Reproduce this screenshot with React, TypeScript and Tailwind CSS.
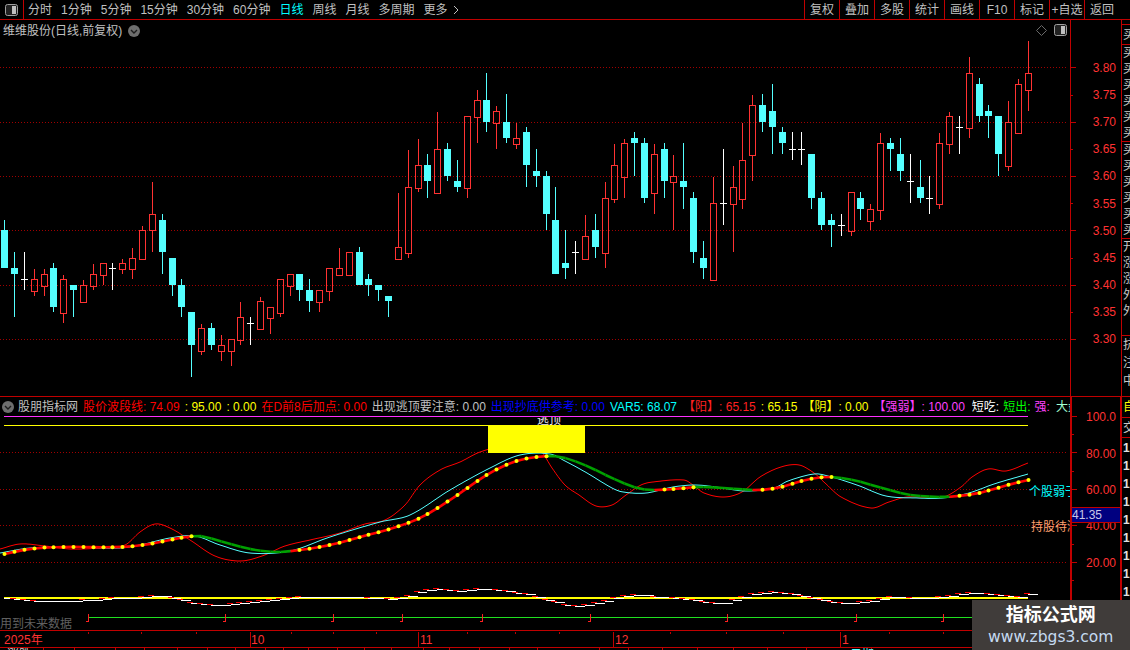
const RED = '#ff3232'
const CYAN = '#54ffff'
const LINE = '#c00000'

type Row = [string, number, number, number, number, number]

// rows are [type, x, wick top, body top, body bottom, wick bottom], read off 3x crops
const scale = (ox: number, oy: number, rows: Row[]) =>
  rows.map(([t, x, wt, bt, bb, wb]) => ({
    t,
    x: Math.floor(ox + x / 3),
    wt: Math.round(oy + wt / 3),
    bt: Math.round(oy + bt / 3),
    bb: Math.round(oy + bb / 3),
    wb: Math.round(oy + wb / 3),
  }))

const candles = [
  ...scale(0, 170, [
    ['c', 13, 150, 180, 294, 294], ['c', 43, 246, 294, 312, 441], ['w', 73, 246, 328, 328, 360], ['r', 103, 297, 328, 362, 378],
    ['r', 133, 297, 313, 347, 378], ['c', 160, 279, 294, 411, 426], ['r', 190, 315, 328, 428, 459], ['c', 220, 346, 346, 360, 441],
    ['r', 250, 330, 346, 395, 395], ['r', 280, 282, 313, 347, 360], ['r', 310, 280, 280, 314, 345], ['w', 337, 279, 295, 295, 360],
    ['r', 367, 267, 280, 296, 312], ['r', 397, 234, 265, 296, 327], ['r', 427, 168, 181, 266, 266], ['r', 457, 36, 133, 181, 246],
    ['c', 487, 132, 150, 246, 312], ['c', 517, 264, 264, 345, 378], ['c', 544, 327, 345, 411, 441], ['c', 574, 426, 426, 525, 621],
    ['r', 604, 462, 475, 542, 555], ['c', 634, 459, 474, 525, 540], ['r', 664, 495, 526, 542, 573], ['r', 694, 508, 508, 542, 588],
    ['r', 721, 396, 442, 509, 525], ['w', 751, 441, 460, 460, 525], ['r', 781, 381, 394, 476, 476], ['r', 811, 412, 412, 443, 492],
    ['r', 841, 328, 328, 428, 441], ['r', 871, 313, 313, 347, 378], ['c', 898, 312, 312, 360, 393], ['c', 928, 327, 360, 393, 426],
    ['r', 958, 361, 361, 395, 426], ['r', 988, 295, 295, 362, 393], ['r', 1018, 234, 295, 314, 314], ['r', 1048, 247, 247, 314, 314],
    ['c', 1078, 231, 246, 345, 345], ['c', 1105, 312, 327, 345, 378], ['c', 1135, 345, 345, 360, 393], ['c', 1165, 378, 378, 393, 441],
  ]),
  ...scale(380, 60, [
    ['r', 55, 399, 562, 596, 596], ['r', 85, 270, 382, 578, 594], ['r', 115, 237, 316, 383, 396], ['c', 142, 282, 315, 363, 414],
    ['r', 172, 156, 268, 398, 398], ['c', 202, 249, 267, 348, 363], ['c', 232, 300, 363, 381, 396], ['r', 262, 169, 169, 383, 414],
    ['r', 292, 90, 121, 170, 249], ['c', 319, 39, 120, 186, 216], ['r', 349, 138, 154, 188, 267], ['c', 379, 102, 186, 234, 249],
    ['r', 409, 189, 235, 251, 267], ['c', 439, 201, 216, 315, 381], ['c', 469, 267, 333, 348, 381], ['c', 499, 333, 348, 462, 510],
    ['c', 526, 381, 480, 642, 642], ['c', 556, 510, 609, 624, 657], ['w', 586, 543, 577, 577, 642], ['r', 616, 465, 529, 596, 596],
    ['c', 646, 462, 510, 561, 594], ['r', 676, 366, 415, 578, 624], ['r', 703, 252, 316, 416, 429], ['r', 733, 237, 250, 350, 414],
    ['c', 763, 216, 234, 249, 348], ['c', 793, 234, 249, 414, 429], ['r', 823, 252, 283, 398, 462], ['c', 853, 249, 267, 363, 414],
    ['r', 880, 285, 349, 365, 510], ['c', 910, 249, 363, 381, 447], ['c', 940, 396, 414, 576, 609], ['c', 970, 543, 594, 624, 657],
    ['r', 1000, 350, 430, 659, 659], ['w', 1030, 267, 430, 430, 495],
  ]),
  ...scale(730, 50, [
    ['r', 10, 348, 412, 461, 606], ['r', 37, 219, 331, 446, 477], ['r', 67, 135, 166, 314, 393], ['c', 97, 132, 165, 216, 246],
    ['c', 127, 102, 183, 231, 312], ['c', 157, 231, 246, 279, 312], ['w', 187, 246, 298, 298, 330], ['w', 214, 246, 298, 298, 345],
    ['c', 244, 312, 312, 444, 477], ['c', 274, 426, 444, 525, 540], ['c', 304, 492, 510, 525, 591], ['w', 334, 492, 526, 526, 558],
    ['r', 364, 427, 427, 542, 558], ['c', 391, 426, 444, 477, 510], ['r', 421, 462, 478, 512, 540], ['r', 451, 249, 280, 479, 510],
    ['c', 481, 264, 279, 297, 363], ['c', 511, 264, 312, 363, 393], ['w', 541, 312, 394, 394, 459], ['c', 571, 330, 411, 444, 459],
    ['w', 598, 378, 445, 445, 492], ['r', 628, 249, 280, 461, 477], ['r', 658, 186, 199, 281, 312], ['w', 688, 198, 232, 232, 312],
    ['r', 718, 21, 70, 233, 264], ['c', 748, 84, 102, 198, 216], ['c', 775, 165, 183, 198, 264], ['c', 805, 198, 198, 312, 378],
    ['r', 835, 153, 217, 347, 363], ['r', 865, 87, 103, 248, 248], ['r', 895, -27, 70, 119, 183],
  ]),
]

const redCurve = [[0, 549], [20, 544], [45, 546], [70, 549], [100, 548], [125, 545], [140, 532], [155, 524], [170, 528], [190, 540], [215, 556], [240, 561], [262, 556], [285, 546], [310, 540], [340, 533], [365, 524], [385, 520], [405, 505], [420, 485], [440, 470], [460, 462], [480, 452], [500, 447], [525, 447], [540, 450], [552, 468], [565, 485], [579, 495], [596, 506], [612, 505], [626, 495], [641, 485], [653, 482], [684, 480], [693, 485], [704, 493], [724, 497], [742, 492], [760, 477], [781, 467], [799, 465], [814, 473], [825, 483], [841, 497], [871, 508], [889, 502], [907, 497], [943, 497], [961, 487], [972, 477], [988, 469], [1006, 471], [1028, 463]]
const cyanCurve = [[0, 553], [30, 548], [70, 547], [120, 548], [140, 545], [170, 538], [195, 536], [220, 545], [250, 553], [290, 551], [330, 537], [380, 522], [410, 515], [450, 490], [490, 468], [520, 455], [550, 454], [565, 461], [587, 473], [612, 488], [623, 492], [646, 493], [673, 487], [695, 485], [716, 487], [745, 491], [774, 488], [788, 481], [814, 474], [828, 476], [857, 485], [886, 496], [918, 498], [943, 498], [969, 493], [994, 484], [1028, 474]]
const mainCurve = [[0, 555], [30, 549], [60, 547], [120, 547], [150, 544], [180, 538], [200, 536], [220, 541], [250, 549], [275, 552], [300, 550], [330, 545], [360, 537], [390, 529], [420, 518], [450, 500], [490, 473], [520, 460], [550, 456], [565, 458], [587, 466], [612, 478], [637, 488], [652, 490], [673, 489], [702, 487], [738, 489], [760, 490], [781, 487], [810, 479], [832, 477], [857, 481], [882, 488], [911, 495], [943, 497], [958, 496], [979, 493], [1008, 485], [1028, 480]]
const oscCurve = [[4, 598], [22, 600], [47, 601], [72, 601], [101, 599], [144, 597], [159, 596], [173, 598], [187, 602], [213, 605], [234, 604], [252, 602], [278, 599], [299, 597], [324, 597], [346, 597], [375, 598], [400, 598], [418, 592], [436, 589], [454, 591], [483, 589], [505, 591], [533, 596], [565, 605], [576, 606], [601, 602], [616, 598], [634, 595], [659, 597], [684, 599], [709, 603], [727, 602], [749, 595], [770, 592], [796, 595], [817, 599], [839, 603], [871, 601], [889, 597], [925, 598], [954, 595], [979, 593], [997, 595], [1019, 597], [1028, 594]]

// smooth value of a waypoint list at x (cubic hermite)
const at = (pts: number[][], x: number) => {
  const n = pts.length
  const slope = (i: number) => {
    const a = pts[Math.max(i - 1, 0)]
    const b = pts[Math.min(i + 1, n - 1)]
    return (b[1] - a[1]) / (b[0] - a[0])
  }
  for (let i = 1; i < n; i++) {
    if (x <= pts[i][0]) {
      const [x0, y0] = pts[i - 1]
      const [x1, y1] = pts[i]
      const h = x1 - x0
      const t = (x - x0) / h
      const t2 = t * t
      const t3 = t2 * t
      return (2 * t3 - 3 * t2 + 1) * y0 + (t3 - 2 * t2 + t) * h * slope(i - 1) + (-2 * t3 + 3 * t2) * y1 + (t3 - t2) * h * slope(i)
    }
  }
  return pts[n - 1][1]
}
const smooth = (pts: number[][]) => {
  const out: string[] = []
  for (let x = 0; x <= 1028; x += 2) out.push(`${x},${at(pts, x).toFixed(1)}`)
  return out.join(' ')
}
const rising = (x: number) =>
  x <= 200 || (x >= 295 && x <= 553) || (x >= 655 && x <= 703) || (x >= 760 && x <= 832) || (x >= 955)

const tabs = ['分时', '1分钟', '5分钟', '15分钟', '30分钟', '60分钟', '日线', '周线', '月线', '多周期', '更多']
const tools = ['复权', '叠加', '多股', '统计', '画线', 'F10', '标记', '+自选']
const prices = ['3.80', '3.75', '3.70', '3.65', '3.60', '3.55', '3.50', '3.45', '3.40', '3.35', '3.30']
const levels = ['100.0', '80.00', '60.00', '40.00', '20.00']
const monthMarks = [88, 225, 333, 402, 482, 590, 727, 856, 943]
const minorTop = [88, 141, 196, 291, 333, 376, 467, 515, 559, 670, 726, 783, 889, 943]
const minorBottom = [43, 74, 115, 144, 177, 207, 235, 265, 283, 308, 337, 364, 391, 423, 449, 479, 509, 537, 599, 628, 662, 697, 733, 767, 806, 871]

const PanelIcon = () => (
  <svg width="13" height="12" viewBox="0 0 13 12">
    <rect x="0.5" y="0.5" width="12" height="11" rx="2" fill="#222" stroke="#a0a0a0" />
    <rect x="7" y="2" width="4" height="8" fill="#c0c0c0" />
  </svg>
)

const Chevron = () => (
  <svg width="12" height="12" viewBox="0 0 12 12" className="shrink-0">
    <circle cx="6" cy="6" r="6" fill="#6e6e6e" />
    <path d="M3 5l3 3 3-3" fill="none" stroke="#1c1c1c" strokeWidth="1.4" />
  </svg>
)

const Candles = () => (
  <g shapeRendering="crispEdges">
    {candles.map((c, i) => {
      const color = c.t === 'r' ? RED : c.t === 'c' ? CYAN : '#ffffff'
      return (
        <g key={i} fill={color}>
          <rect x={c.x} y={c.wt} width="1" height={Math.max(c.bt - c.wt, 0)} />
          <rect x={c.x} y={c.bb} width="1" height={Math.max(c.wb - c.bb, 0)} />
          {c.t === 'r' && <rect x={c.x - 2.5} y={c.bt + 0.5} width="6" height={c.bb - c.bt} fill="none" stroke={color} />}
          {c.t === 'c' && <rect x={c.x - 3} y={c.bt} width="7" height={c.bb - c.bt} />}
          {c.t === 'w' && <rect x={c.x - 3} y={c.bt} width="7" height="1" />}
        </g>
      )
    })}
  </g>
)

const Oscillator = () => {
  const xs = candles.map((c) => c.x)
  return (
    <g shapeRendering="crispEdges">
      <rect x="4" y="597" width="1024" height="2" fill="#ffff00" />
      {xs.map((x, i) => {
        const y = Math.round(at(oscCurve, x))
        const prev = i ? Math.round(at(oscCurve, xs[i - 1])) : y
        const next = xs[i + 1] ?? x + 10
        return (
          <g key={x}>
            {y !== prev && <rect x={x - 4} y={y - 1} width="6" height="1" fill="#ff0000" />}
            <rect x={x} y={y} width={next - x} height="1" fill="#ffffff" />
          </g>
        )
      })}
    </g>
  )
}

const Curves = () => {
  const xs = candles.map((c) => c.x + 0.5)
  return (
    <g>
      <polyline points={smooth(redCurve)} fill="none" stroke="#ff0000" strokeWidth="1" />
      <polyline points={smooth(cyanCurve)} fill="none" stroke={CYAN} strokeWidth="1" />
      {xs.slice(1).map((x, i) => (
        <line
          key={x}
          x1={xs[i]}
          y1={at(mainCurve, xs[i])}
          x2={x}
          y2={at(mainCurve, x)}
          stroke={rising(x) ? '#ff0000' : '#00a000'}
          strokeWidth="2.6"
        />
      ))}
      {xs.filter(rising).map((x) => (
        <circle key={x} cx={x} cy={at(mainCurve, x)} r="2" fill="#ffff00" />
      ))}
    </g>
  )
}

const Vertical = ({ chars }: { chars: string }) => (
  <div className="h-[97px] border-b border-[#c00000] pl-[1px] text-[12px] leading-[16px] text-[#c8c8c8]">
    {chars.split('').map((ch, i) => (
      <div key={i}>{ch}</div>
    ))}
  </div>
)

export default function App() {
  return (
    <div className="relative flex h-[650px] w-[1130px] flex-col overflow-hidden bg-black text-[12px] text-[#c0c0c0] [font-family:'Liberation_Sans','Noto_Sans_CJK_SC',sans-serif]">
      {/* top toolbar */}
      <div className="flex h-[20px] shrink-0 items-center border-b border-[#c00000]">
        <div className="flex h-full w-[24px] items-center justify-center border-r border-[#c00000]">
          <PanelIcon />
        </div>
        <div className="flex flex-1 items-center gap-[9px] pl-[4px]">
          {tabs.map((t) => (
            <span key={t} className={t === '日线' ? 'text-[#00ffff]' : ''}>{t}</span>
          ))}
          <svg width="6" height="10" viewBox="0 0 6 10" className="-ml-[4px]">
            <path d="M1 1l4 4-4 4" fill="none" stroke="#c0c0c0" />
          </svg>
        </div>
        <div className="flex h-full">
          {tools.map((t) => (
            <div key={t} className="flex w-[35px] items-center justify-center border-l border-[#c00000]">{t}</div>
          ))}
          <div className="flex w-[46px] items-center justify-center border-l border-[#c00000] pr-[11px]">返回</div>
        </div>
      </div>

      {/* price panel */}
      <div className="flex h-[376px] shrink-0">
        <div className="relative w-[1070px] shrink-0">
          <svg width="1070" height="376" viewBox="0 20 1070 376" className="block">
            {[67, 122, 176, 230, 285, 339].map((y) => (
              <line key={y} x1="0" y1={y + 0.5} x2="1068" y2={y + 0.5} stroke="#a00000" strokeDasharray="1 2" shapeRendering="crispEdges" />
            ))}
            <Candles />
          </svg>
          <div className="absolute left-[3px] top-[2px] flex items-center gap-[6px]">
            <span>维维股份(日线,前复权)</span>
            <Chevron />
          </div>
          <div className="absolute right-[3px] top-[4px] flex items-center gap-[7px]">
            <svg width="11" height="11" viewBox="0 0 11 11">
              <path d="M5.5 0.5l5 5-5 5-5-5z" fill="none" stroke="#6a6a6a" />
            </svg>
            <PanelIcon />
          </div>
        </div>
        <div className="relative w-[52px] shrink-0 border-x border-[#c00000] pt-[34px] text-[#ff3232]">
          <svg width="6" height="376" viewBox="0 20 6 376" className="absolute left-0 top-0">
            {[67, 122, 176, 230, 285, 339].map((y) => (
              <rect key={y} x="0" y={y} width="5" height="1" fill={LINE} />
            ))}
            {[95, 149, 203, 258, 312].map((y) => (
              <rect key={y} x="0" y={y} width="2" height="1" fill={LINE} />
            ))}
          </svg>
          {prices.map((p) => (
            <div key={p} className="flex h-[27.2px] items-center justify-end pr-[5px]">{p}</div>
          ))}
        </div>
        <div className="flex-1 overflow-hidden">
          <div className="h-[5px] border-b border-[#c00000]" />
          <div className="flex h-[20px] items-center border-b border-[#c00000] pl-[1px] text-[#c8c8c8]">买</div>
          <Vertical chars="买买买买买买" />
          <Vertical chars="买买买买买买" />
          <Vertical chars="开涨涨外外" />
          <div className="pl-[1px] leading-[18px] text-[#c8c8c8]">
            <div>抗</div>
            <div>注</div>
            <div>中</div>
          </div>
        </div>
      </div>

      {/* indicator panel */}
      <div className="flex h-[234px] shrink-0 border-t border-[#c00000]">
        <div className="relative w-[1070px] shrink-0 overflow-hidden">
          <div className="flex h-[19px] w-[1070px] items-center gap-[5px] whitespace-nowrap pl-[2px]">
            <Chevron />
            <span className="-ml-[1px]">股朋指标网</span>
            <span className="text-[#ff0000]">股价波段线: 74.09</span>
            <span className="text-[#ffff00]">: 95.00</span>
            <span className="text-[#ffff00]">: 0.00</span>
            <span className="text-[#ff0000]">在D前8后加点: 0.00</span>
            <span>出现逃顶要注意: 0.00</span>
            <span className="text-[#0000ff]">出现抄底供参考: 0.00</span>
            <span className="text-[#00ffff]">VAR5: 68.07</span>
            <span className="ml-[1px] text-[#ff2020]">【阳】: 65.15</span>
            <span className="text-[#ffff00]">: 65.15</span>
            <span className="text-[#ffff00]">【阴】: 0.00</span>
            <span className="text-[#ff40ff]">【强弱】: 100.00</span>
            <span className="ml-[2px] text-white">短吃:</span>
            <span className="-ml-[1px] text-[#00ff00]">短出:</span>
            <span className="-ml-[1px] text-[#ff40ff]">强:</span>
            <span className="ml-[1px] text-[#a0ffd0]">大盘</span>
          </div>
          <svg width="1070" height="234" viewBox="0 397 1070 234" className="absolute left-0 top-0">
            {[452, 489, 525, 562].map((y) => (
              <line key={y} x1="0" y1={y + 0.5} x2="1068" y2={y + 0.5} stroke="#a00000" strokeDasharray="1 2" shapeRendering="crispEdges" />
            ))}
            <rect x="4" y="416" width="1024" height="1" fill="#ff30ff" shapeRendering="crispEdges" />
            <rect x="4" y="425" width="1024" height="1" fill="#ffff00" shapeRendering="crispEdges" />
            <Curves />
            <rect x="488" y="426" width="97" height="27" fill="#ffff00" />
            <Oscillator />
            <rect x="88" y="617" width="982" height="1" fill="#20e020" shapeRendering="crispEdges" />
            {monthMarks.map((x) => (
              <path key={x} d={`M${x - 2} 621.5H${x + 0.5}V614`} fill="none" stroke="#ff2020" shapeRendering="crispEdges" />
            ))}
          </svg>
          {/* labels that sit on the plot */}
          <div className="absolute left-[537px] top-[20px] h-[8px] w-[26px] overflow-hidden text-[#f0f0f0]">
            <div className="-mt-[6px]">逃顶</div>
          </div>
          <span className="absolute left-[1029px] top-[86px] whitespace-nowrap text-[#00ffff]">个股弱于</span>
          <span className="absolute left-[1031px] top-[121px] whitespace-nowrap text-[#ffa070]">持股待涨</span>
          <span className="absolute left-0 top-[218px] text-[#606060]">用到未来数据</span>
        </div>
        <div className="relative w-[52px] shrink-0 border-x-2 border-[#c00000] pt-[2px] text-[#ff3232]">
          <svg width="6" height="234" viewBox="0 397 6 234" className="absolute left-0 top-0">
            {[416, 452, 489, 525, 562].map((y) => (
              <rect key={y} x="0" y={y} width="5" height="1" fill={LINE} />
            ))}
            {[434, 471, 507, 544, 580].map((y) => (
              <rect key={y} x="0" y={y} width="2" height="1" fill={LINE} />
            ))}
          </svg>
          {levels.map((l) => (
            <div key={l} className="flex h-[36.4px] items-center justify-end pr-[4px]">{l}</div>
          ))}
          <div className="absolute left-0 top-[110px] flex h-[16px] w-[48px] items-center border-y border-[#c00000] bg-[#000080] text-[#c8c8e8]">41.35</div>
        </div>
        <div className="flex-1 overflow-hidden">
          <div className="flex h-[21px] items-center border-b border-[#c00000] pl-[1px] text-[#ffff00]">自</div>
          <div className="flex h-[20px] items-center border-b border-[#c00000] pl-[1px] text-[#c8c8c8]">交</div>
          <div className="pl-[1px] pt-[1px] text-[#e0e0e0]">
            {['1', '1', '1', '1', '1', '1', '1', '1', '1', '1'].map((n, i) => (
              <div key={i} className="flex h-[18px] items-center font-bold">{n}</div>
            ))}
          </div>
        </div>
      </div>

      {/* time axis */}
      <div className="h-[20px] shrink-0 border-t border-[#c00000]">
        <svg width="1130" height="20" viewBox="0 630 1130 20" className="block">
          {minorTop.map((x) => (
            <rect key={x} x={x} y="631" width="1" height="2" fill={LINE} />
          ))}
          {[250, 418, 613, 840].map((x) => (
            <rect key={x} x={x} y="631" width="1" height="15" fill={LINE} />
          ))}
          <rect x="0" y="646" width="1130" height="1" fill={LINE} />
          {minorBottom.map((x) => (
            <rect key={x} x={x} y="647" width="1" height="3" fill={LINE} />
          ))}
          <text x="4" y="643" fill={RED} fontSize="12">2025年</text>
          <text x="251" y="643" fill={RED} fontSize="12">10</text>
          <text x="420" y="643" fill={RED} fontSize="12">11</text>
          <text x="615" y="643" fill={RED} fontSize="12">12</text>
          <text x="842" y="643" fill={RED} fontSize="12">1</text>
          <text x="7" y="658" fill="#d0d0d0" fontSize="12">涨跌</text>
          <text x="850" y="658" fill={CYAN} fontSize="12">日期</text>
        </svg>
      </div>

      {/* site watermark */}
      <div className="absolute bottom-0 right-0 flex h-[50px] w-[158.5px] flex-col items-center justify-center bg-[#403c3a]">
        <div className="text-[18px] font-bold leading-[24px] text-white">指标公式网</div>
        <div className="text-[15.5px] leading-[20px] text-[#c5daf0] [font-family:'DejaVu_Sans',sans-serif]">www.zbgs3.com</div>
      </div>
    </div>
  )
}
